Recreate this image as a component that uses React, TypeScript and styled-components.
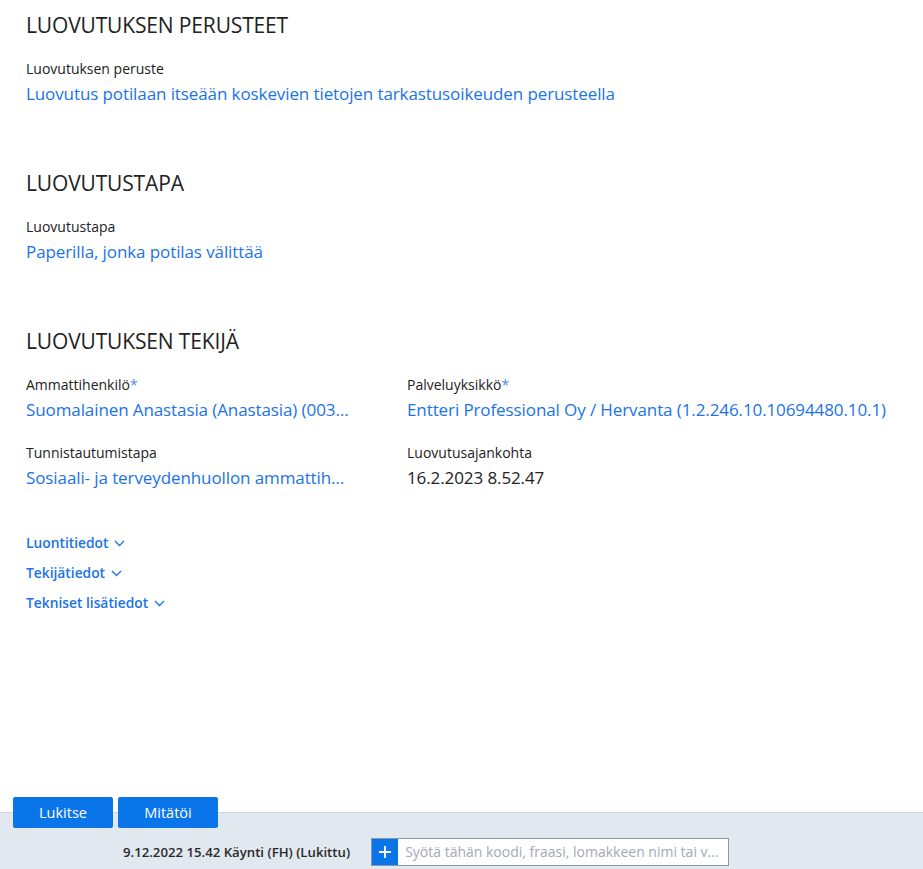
import React from "react";
import styled, { createGlobalStyle } from "styled-components";

const GlobalStyle = createGlobalStyle`
  html, body {
    margin: 0;
    padding: 0;
    background: #ffffff;
    font-family: "Open Sans", "Noto Sans", sans-serif;
    color: #222;
  }
`;

const Page = styled.div`
  width: 923px;
  height: 869px;
  display: flex;
  flex-direction: column;
  overflow: hidden;
`;

const Content = styled.div`
  flex: 1;
  padding: 10px 26px 0;
`;

const Section = styled.section`
  margin-bottom: 59px;
`;

const Heading = styled.h2`
  margin: 0 0 19px;
  font-size: 21px;
  font-weight: 400;
  line-height: 30px;
  color: #222;
  letter-spacing: -0.15px;
`;

const Grid = styled.div`
  display: grid;
  grid-template-columns: 381px 1fr;
  row-gap: 18px;
`;

const Field = styled.div`
  display: flex;
  flex-direction: column;
  min-width: 0;
`;

const Label = styled.div`
  font-size: 14px;
  line-height: 20px;
  color: #222;
`;

const Req = styled.span`
  color: #4a8fe0;
`;

const Value = styled.div<{ $link?: boolean }>`
  font-size: 17px;
  line-height: 30px;
  color: ${(p) => (p.$link ? "#1a73e8" : "#222")};
  white-space: nowrap;
  overflow: hidden;
  text-overflow: ellipsis;
  max-width: 324px;
  letter-spacing: -0.1px;
`;

const WideValue = styled(Value)`
  max-width: none;
`;

const Toggles = styled.div`
  display: flex;
  flex-direction: column;
  gap: 8px;
  margin-top: -20px;
`;

const Toggle = styled.div`
  display: flex;
  align-items: center;
  gap: 6px;
  font-size: 13.8px;
  font-weight: 600;
  color: #1a73e8;
  line-height: 22px;
`;

const Footer = styled.div`
  position: relative;
  height: 56px;
  background: #e2e8ef;
  border-top: 1px solid #cdd5de;
  display: flex;
  align-items: center;
`;

const Buttons = styled.div`
  position: absolute;
  left: 13px;
  top: -16px;
  display: flex;
  gap: 5px;
`;

const Button = styled.button`
  width: 100px;
  height: 31px;
  border: none;
  border-radius: 2px;
  background: #0a75e8;
  color: #fff;
  font-family: inherit;
  font-size: 14.5px;
`;

const Status = styled.div`
  margin-left: 123px;
  margin-top: 21px;
  font-size: 13.2px;
  font-weight: 600;
  color: #2a2a2a;
  white-space: nowrap;
`;

const Entry = styled.div`
  margin-left: 21px;
  margin-top: 21px;
  width: 356px;
  height: 26px;
  display: flex;
  border: 1px solid #8b98a8;
  background: #fff;
`;

const Plus = styled.div`
  width: 26px;
  background: #0a75e8;
  display: flex;
  align-items: center;
  justify-content: center;
`;

const Placeholder = styled.div`
  flex: 1;
  min-width: 0;
  padding: 0 4px 0 7px;
  font-size: 14px;
  line-height: 26px;
  color: #a3aab3;
  white-space: nowrap;
  overflow: hidden;
  text-overflow: ellipsis;
`;

const Chevron = () => (
  <svg width="11" height="7" viewBox="0 0 11 7">
    <path d="M1 1l4.5 4.5L10 1" fill="none" stroke="#1a73e8" strokeWidth="1.3" />
  </svg>
);

export default function App() {
  return (
    <Page>
      <GlobalStyle />
      <Content>
        <Section>
          <Heading>LUOVUTUKSEN PERUSTEET</Heading>
          <Field>
            <Label>Luovutuksen peruste</Label>
            <WideValue $link>
              Luovutus potilaan itseään koskevien tietojen tarkastusoikeuden perusteella
            </WideValue>
          </Field>
        </Section>
        <Section>
          <Heading>LUOVUTUSTAPA</Heading>
          <Field>
            <Label>Luovutustapa</Label>
            <WideValue $link>Paperilla, jonka potilas välittää</WideValue>
          </Field>
        </Section>
        <Section>
          <Heading>LUOVUTUKSEN TEKIJÄ</Heading>
          <Grid>
            <Field>
              <Label>
                Ammattihenkilö<Req>*</Req>
              </Label>
              <Value $link>Suomalainen Anastasia (Anastasia) (003456789012)</Value>
            </Field>
            <Field>
              <Label>
                Palveluyksikkö<Req>*</Req>
              </Label>
              <WideValue $link>Entteri Professional Oy / Hervanta (1.2.246.10.10694480.10.1)</WideValue>
            </Field>
            <Field>
              <Label>Tunnistautumistapa</Label>
              <Value $link>Sosiaali- ja terveydenhuollon ammattihenkilökortti</Value>
            </Field>
            <Field>
              <Label>Luovutusajankohta</Label>
              <WideValue>16.2.2023 8.52.47</WideValue>
            </Field>
          </Grid>
        </Section>
        <Toggles>
          <Toggle>
            Luontitiedot <Chevron />
          </Toggle>
          <Toggle>
            Tekijätiedot <Chevron />
          </Toggle>
          <Toggle>
            Tekniset lisätiedot <Chevron />
          </Toggle>
        </Toggles>
      </Content>
      <Footer>
        <Buttons>
          <Button>Lukitse</Button>
          <Button>Mitätöi</Button>
        </Buttons>
        <Status>9.12.2022 15.42 Käynti (FH) (Lukittu)</Status>
        <Entry>
          <Plus>
            <svg width="14" height="14" viewBox="0 0 14 14">
              <path d="M7 1v12M1 7h12" stroke="#fff" strokeWidth="1.8" />
            </svg>
          </Plus>
          <Placeholder>Syötä tähän koodi, fraasi, lomakkeen nimi tai vastaava</Placeholder>
        </Entry>
      </Footer>
    </Page>
  );
}
